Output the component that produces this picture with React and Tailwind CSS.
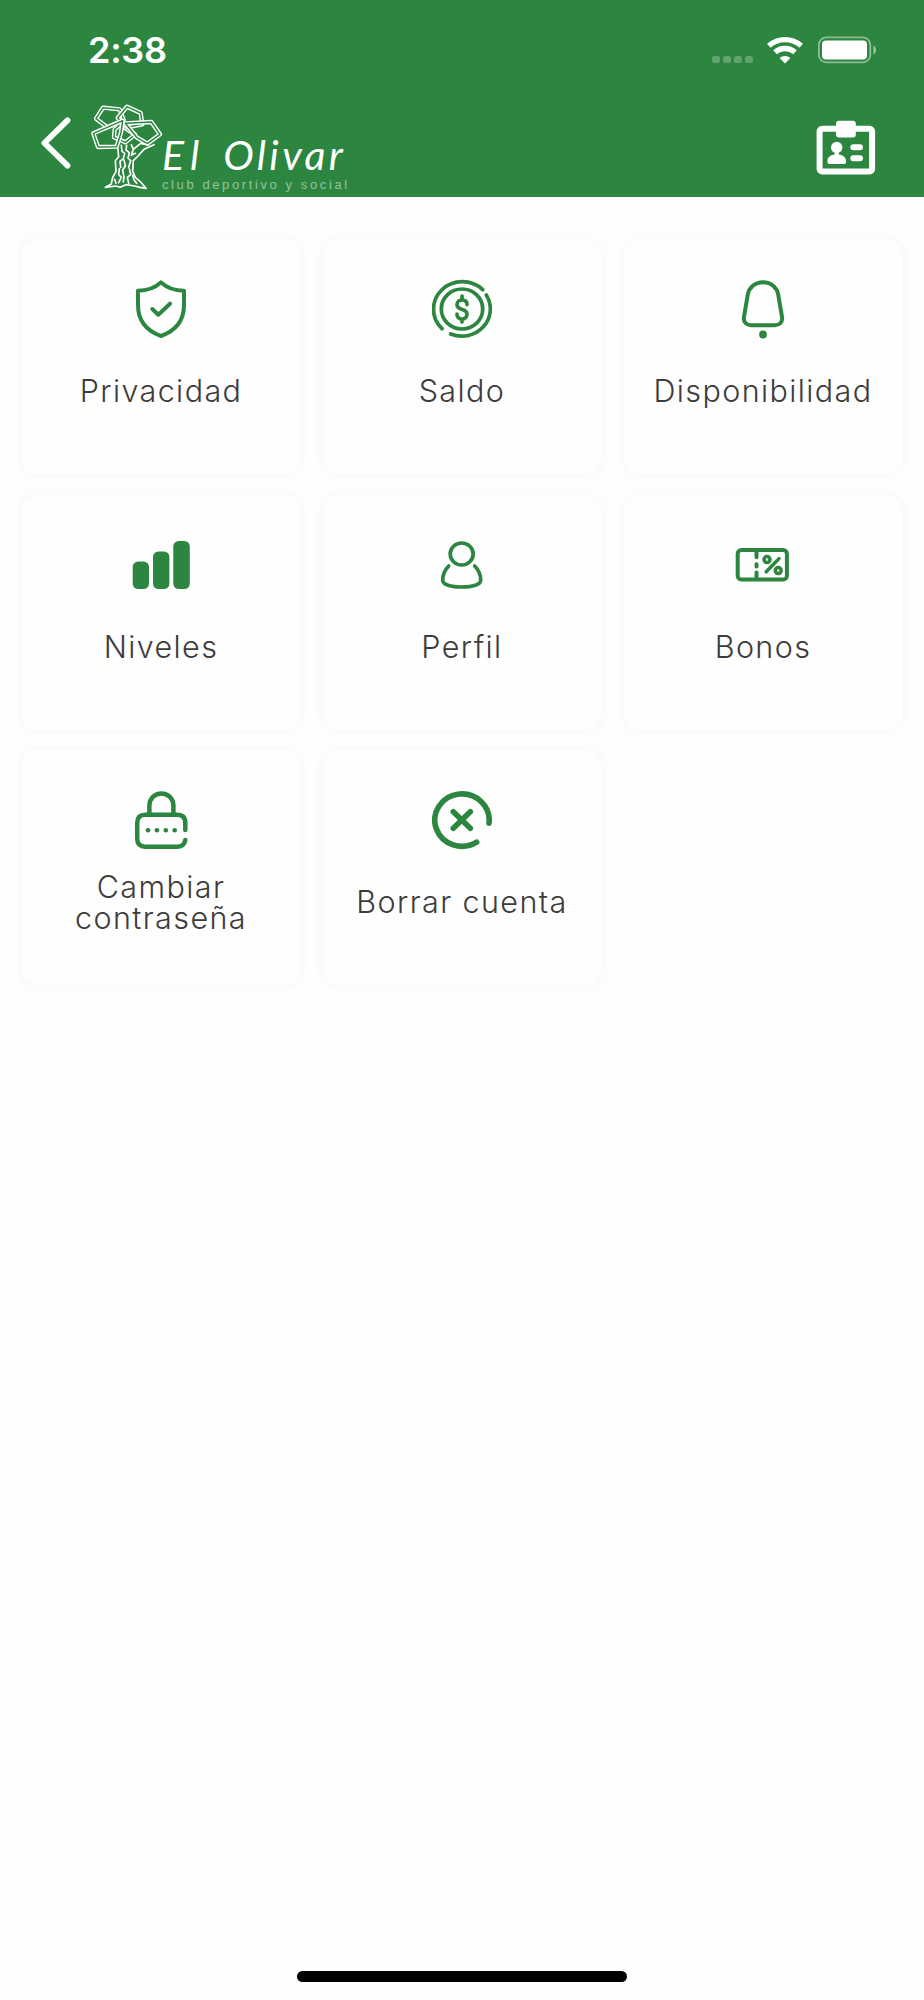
const iconBase = {
  width: 60,
  height: 60,
  viewBox: '0 0 60 60',
  fill: 'none',
  stroke: 'currentColor',
  strokeWidth: 4,
  strokeLinecap: 'round',
  strokeLinejoin: 'round',
};

function ShieldIcon() {
  return (
    <svg {...iconBase}>
      <path d="M30 3.4C24 9 16 11.7 7 11.7V26c0 16 9 26 23 31 14-5 23-15 23-31V11.7C44 11.7 36 9 30 3.4Z" />
      <path d="M21.3 30l6 5.7L39 24.7" />
    </svg>
  );
}

function CoinIcon() {
  return (
    <svg {...iconBase} strokeWidth={3.7}>
      <path d="M50.7 10.7A28.5 27.2 0 1 0 10 49.7" />
      <path d="M54.3 16A28.5 27.2 0 0 1 18.7 55" />
      <ellipse cx="30" cy="30" rx="20.7" ry="20" />
      <path d="M30 17V21M30 40V43M35 25.6C35 22.6 33 21 30 21s-5 2-5 4.8C25 32 35 29 35 35c0 3-2 5-5 5s-5-2-5-5" />
    </svg>
  );
}

function BellIcon() {
  return (
    <svg {...iconBase}>
      <path d="M30 3.2C22 3.2 16 8.5 14.8 15.5L10.9 38.3C10.3 43 13.5 46.2 18 46.2H42C46.5 46.2 49.7 43 49.1 38.3L45.2 15.5C44 8.5 38 3.2 30 3.2Z" />
      <circle cx="30" cy="55.5" r="3.9" fill="currentColor" stroke="none" />
    </svg>
  );
}

function LevelsIcon() {
  return (
    <svg {...iconBase} fill="currentColor" stroke="none">
      <rect x="1.7" y="26.4" width="16.3" height="27.6" rx="5.5" />
      <rect x="22" y="16.4" width="16.4" height="37.6" rx="5.5" />
      <rect x="42.3" y="6" width="16.5" height="48" rx="5.5" />
    </svg>
  );
}

function ProfileIcon() {
  return (
    <svg {...iconBase} strokeWidth={3.7}>
      <ellipse cx="29.7" cy="19" rx="11.5" ry="11" />
      <path d="M16.7 31C12.7 35 10.7 40 10.7 45.3 10.7 49.5 18.7 52 29.7 52S48.7 49.5 48.7 45.3C48.7 40 46.7 35 42.7 31" />
    </svg>
  );
}

function VoucherIcon() {
  return (
    <svg {...iconBase}>
      <rect x="4.7" y="15.1" width="49.2" height="29.4" rx="3.6" />
      <path d="M23.5 15V22.2M23.5 29.2V31.4M23.5 37.6V44" />
      <circle cx="34" cy="24.6" r="3" strokeWidth="3.5" />
      <circle cx="45.2" cy="35.6" r="3" strokeWidth="3.5" />
      <path d="M46 23.6L33.2 36.8" strokeWidth="3.5" />
    </svg>
  );
}

function PasswordIcon() {
  return (
    <svg {...iconBase} strokeWidth={4.5}>
      <path d="M54.3 40V33Q54.3 24.8 46 24.8H14.4Q6.2 24.8 6.2 33V48.6Q6.2 56.8 14.4 56.8H45.5Q53.3 56.8 54.3 50" />
      <path d="M18.4 24V15.4a12 12 0 0 1 24 0V24" />
      <g fill="currentColor" stroke="none">
        <circle cx="17" cy="40.3" r="2.3" />
        <circle cx="25.9" cy="40.3" r="2.3" />
        <circle cx="34.8" cy="40.3" r="2.3" />
        <circle cx="43.7" cy="40.3" r="2.3" />
      </g>
    </svg>
  );
}

function DeleteIcon() {
  return (
    <svg {...iconBase} strokeWidth={5.6}>
      <path d="M57 33.2A27.2 26.2 0 1 0 44.6 52.2" />
      <path d="M21.3 21.8L38.3 38.2M38.3 21.8L21.3 38.2" />
    </svg>
  );
}

// Each leaf is a double outline: wide white stroke with a thin green one on top.
const leaves = [
  'M300 104L345 134L316 157L282 142L284 118Z',
  'M249 53L299 58L311 90L262 112L228 86Z',
  'M321 50L362 69L367 103L321 112L293 84Z',
  'M308 92L220 130L234 171L290 170L303 128Z',
  'M394 96L420 133L382 161L350 142L316 100Z',
];

function TreeLogo() {
  return (
    <svg width="75" height="90" viewBox="210 36 225 270" fill="none" strokeLinejoin="round" strokeLinecap="round">
      {leaves.map((d) => (
        <g key={d}>
          <path d={d} stroke="white" strokeWidth="13" />
          <path d={d} stroke="#2c863f" strokeWidth="4.5" />
        </g>
      ))}
      <g stroke="white" strokeWidth="5">
        <path d="M293 172L296 200 286 212 288 245 278 262 274 282 256 292 288 288 300 292 318 284 344 288 360 292 378 295 362 276 346 262 338 244 340 212 354 198 372 178 402 164" />
        <path d="M334 164L340 178 362 160 384 165M340 178L334 196 346 190" />
        <path d="M304 166L306 184 314 190 310 206 300 214 302 232M320 166L318 180 328 188 324 204 332 212 326 232M312 210L316 228 308 240 312 262M298 236L296 254 304 262 296 278M328 236L332 254 322 262 326 280M338 256L342 270 350 280M284 268L288 280M312 262L310 276" />
      </g>
    </svg>
  );
}

function StatusBar() {
  return (
    <div className="flex h-[100px] items-center justify-between pr-[47px] pl-[88px]">
      <span className="-mt-px text-[36px] leading-none font-[570] tracking-[-0.3px]">2:38</span>
      <div className="flex items-center">
        <div className="mt-[19px] mr-[14px] flex gap-[3.5px]">
          {[0, 1, 2, 3].map((n) => (
            <span key={n} className="size-[7.6px] rounded-[2.5px] bg-white/25" />
          ))}
        </div>
        <svg width="36" height="28" viewBox="0 0 36 28" fill="none" stroke="white" strokeWidth="5.4">
          <path d="M1.8 9.8C11 1.5 25 1.5 34.2 9.8" />
          <path d="M8 16.2C13.8 11.2 22.2 11.2 28 16.2" />
          <path d="M18 27.6L12.6 22C15.5 19.2 20.5 19.2 23.4 22Z" fill="white" stroke="none" />
        </svg>
        <svg className="ml-[15px]" width="59" height="28" viewBox="0 0 59 28">
          <rect x="0.9" y="1.4" width="51.4" height="25" rx="7.5" fill="none" stroke="white" strokeOpacity="0.45" strokeWidth="1.8" />
          <rect x="4" y="4.5" width="45" height="19" rx="4" fill="white" />
          <path d="M55.3 9.5C59 11 59 17 55.3 18.5Z" fill="white" fillOpacity="0.5" />
        </svg>
      </div>
    </div>
  );
}

function NavBar() {
  return (
    <div className="flex h-[97px] items-start pl-10">
      <button className="mt-[16px]" aria-label="Volver">
        <svg width="34" height="54" viewBox="0 0 34 54" fill="none" stroke="white" strokeWidth="5.8" strokeLinecap="round" strokeLinejoin="round">
          <path d="M27.5 4.4L4.4 27 27.5 49.6" />
        </svg>
      </button>
      <div className="mt-[2px] ml-4 flex">
        <TreeLogo />
        <div className="-ml-[3px] pt-[31px] whitespace-nowrap">
          <p className="flex gap-[18px] font-['Lato'] text-[41px] leading-[44px] font-normal italic">
            <span className="tracking-[6px]">El</span>
            <span className="tracking-[3.4px]">Olivar</span>
          </p>
          <p className="font-['Liberation_Sans'] text-[13px] leading-4 tracking-[2.6px] text-white/50">club deportivo y social</p>
        </div>
      </div>
      <svg className="mt-[20px] mr-[48px] ml-auto" width="60" height="56" viewBox="0 0 60 56" fill="white">
        <rect x="3.6" y="8.8" width="52.5" height="42.6" rx="2.5" fill="none" stroke="white" strokeWidth="6" />
        <rect x="20" y="0.8" width="19.8" height="16.7" rx="3" />
        <circle cx="20.7" cy="27.5" r="5.7" />
        <path d="M18.7 31.5h4v3c4.5.5 7.3 3 7.3 6.5q0 3-1.5 3H13q-1.6 0-1.6-3c0-3.5 2.8-6 7.3-6.5Z" />
        <rect x="34.3" y="24.2" width="12.7" height="6" rx="3" />
        <rect x="34.3" y="35.2" width="12.7" height="6" rx="3" />
      </svg>
    </div>
  );
}

const options = [
  { label: 'Privacidad', icon: ShieldIcon },
  { label: 'Saldo', icon: CoinIcon },
  { label: 'Disponibilidad', icon: BellIcon },
  { label: 'Niveles', icon: LevelsIcon },
  { label: 'Perfil', icon: ProfileIcon },
  { label: 'Bonos', icon: VoucherIcon },
  { label: 'Cambiar contraseña', icon: PasswordIcon },
  { label: 'Borrar cuenta', icon: DeleteIcon },
];

function OptionCard({ label, icon: Icon }) {
  return (
    <button className="flex h-[235px] flex-col items-center rounded-2xl bg-[#fefefe] px-2 pt-10 text-[#2c863f] shadow-[0_0_14px_rgba(0,0,0,0.04)]">
      <Icon />
      <span className="mt-5 flex h-16 items-center text-center text-[30.5px] leading-[31.5px] font-[360] tracking-[1.4px] text-[#3c3c3c]">
        {label}
      </span>
    </button>
  );
}

export default function App() {
  return (
    <div className="flex h-[2000px] w-[924px] flex-col bg-[#fefefe] font-['Inter',sans-serif]">
      <header className="h-[197px] bg-[#2c863f] text-white">
        <StatusBar />
        <NavBar />
      </header>
      <main className="mt-[42px] grid grid-cols-3 gap-x-[23px] gap-y-[20.5px] px-[22px]">
        {options.map((option) => (
          <OptionCard key={option.label} {...option} />
        ))}
      </main>
      <div className="mx-auto mt-auto mb-[18px] h-[11px] w-[330px] rounded-full bg-black" />
    </div>
  );
}
